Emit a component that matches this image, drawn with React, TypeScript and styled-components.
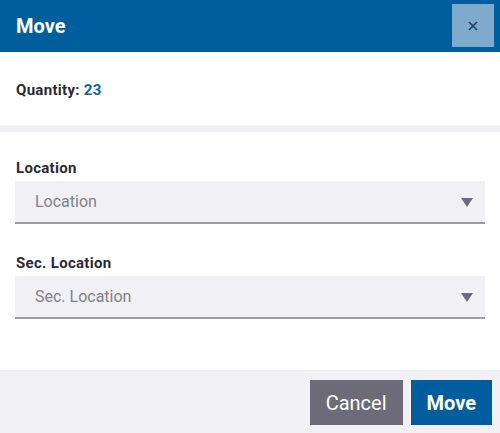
import styled, { createGlobalStyle } from 'styled-components'

const GlobalStyle = createGlobalStyle`
	body {
		margin: 0;
		font-family: Roboto, 'Liberation Sans', sans-serif;
		background: #ffffff;
	}
`

const Dialog = styled.div`
	width: 500px;
	height: 433px;
	display: flex;
	flex-direction: column;
	background: #ffffff;
`

const Header = styled.div`
	height: 52px;
	background: #005e9f;
	display: flex;
	align-items: center;
	justify-content: space-between;
	padding: 0 6px 0 16px;
	box-sizing: border-box;
`

const Title = styled.h1`
	margin: 0;
	color: #ffffff;
	font-size: 20px;
	font-weight: 700;
`

const CloseButton = styled.button`
	width: 42px;
	height: 43px;
	border: none;
	background: #7eaacb;
	display: flex;
	align-items: center;
	justify-content: center;
	padding: 0;
	margin-top: -1px;
`

const QuantityRow = styled.div`
	padding: 2px 16px 0;
	height: 73px;
	display: flex;
	align-items: center;
	font-size: 15px;
	letter-spacing: 0.3px;
	font-weight: 700;
	color: #2a2a35;
	box-sizing: border-box;
`

const Qty = styled.span`
	color: #0a63a3;
	margin-left: 4px;
`

const Divider = styled.div`
	height: 7px;
	background: #f1f1f5;
`

const Form = styled.div`
	flex: 1;
	padding: 27px 15px 0;
	display: flex;
	flex-direction: column;
	gap: 30px;
`

const Field = styled.div`
	display: flex;
	flex-direction: column;
	gap: 4px;
`

const Label = styled.label`
	font-size: 15px;
	letter-spacing: 0.3px;
	font-weight: 700;
	color: #2a2a35;
	padding-left: 1px;
	line-height: 18px;
`

const Select = styled.div`
	height: 41px;
	background: #f1f1f5;
	border-bottom: 2px solid #9b9ba3;
	display: flex;
	align-items: center;
	justify-content: space-between;
	padding: 0 12px 0 20px;
	font-size: 16px;
	color: #80808a;
`

const Footer = styled.div`
	height: 63px;
	background: #f1f1f5;
	display: flex;
	justify-content: flex-end;
	align-items: center;
	gap: 8px;
	padding: 0 8px 0 0;
`

const Button = styled.button<{ $primary?: boolean }>`
	height: 45px;
	border: none;
	padding: 0 16px;
	font-family: Roboto, 'Liberation Sans', sans-serif;
	font-size: 20px;
	color: #ffffff;
	background: ${(p) => (p.$primary ? '#005e9f' : '#6c6b77')};
	font-weight: ${(p) => (p.$primary ? 700 : 400)};
	margin-top: 2px;
`

const Caret = () => (
	<svg width="12" height="10" viewBox="0 0 12 10">
		<path d="M0 1 L12 1 L6 10 Z" fill="#6c6b77" />
	</svg>
)

export default function App() {
	return (
		<>
			<GlobalStyle />
			<Dialog>
				<Header>
					<Title>Move</Title>
					<CloseButton aria-label="Close">
						<svg width="10" height="10" viewBox="0 0 10 10">
							<path d="M1 1 L9 9 M9 1 L1 9" stroke="#1f3f64" strokeWidth="1.6" />
						</svg>
					</CloseButton>
				</Header>
				<QuantityRow>
					Quantity:<Qty>23</Qty>
				</QuantityRow>
				<Divider />
				<Form>
					<Field>
						<Label>Location</Label>
						<Select>
							Location
							<Caret />
						</Select>
					</Field>
					<Field>
						<Label>Sec. Location</Label>
						<Select>
							Sec. Location
							<Caret />
						</Select>
					</Field>
				</Form>
				<Footer>
					<Button>Cancel</Button>
					<Button $primary>Move</Button>
				</Footer>
			</Dialog>
		</>
	)
}
